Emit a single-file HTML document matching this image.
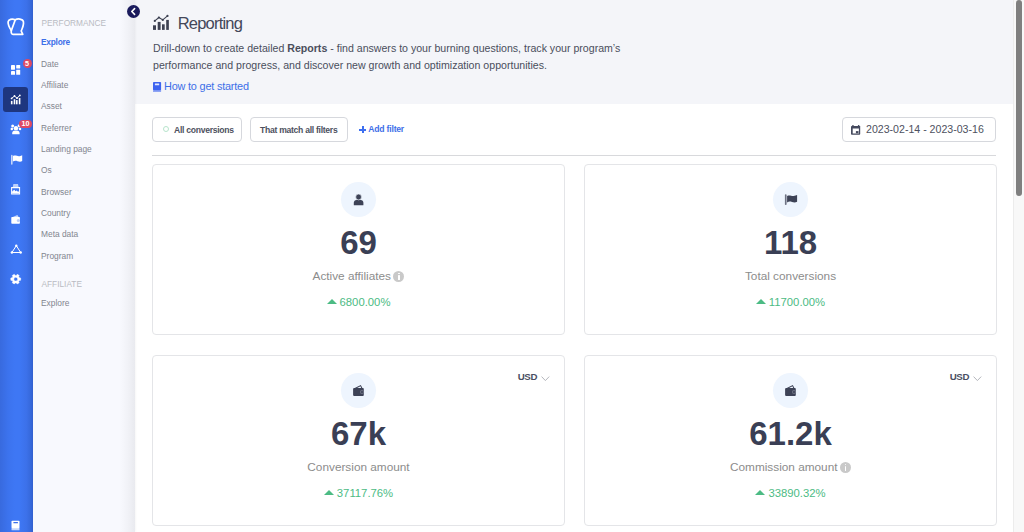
<!DOCTYPE html>
<html><head><meta charset="utf-8">
<style>
*{box-sizing:border-box;margin:0;padding:0}
html,body{width:1024px;height:532px;overflow:hidden;background:#fff;font-family:"Liberation Sans",sans-serif}
.abs{position:absolute}
svg{position:absolute;overflow:visible}
#rail{left:0;top:0;width:33px;height:532px;background:linear-gradient(90deg,#386ade 0%,#3c73ee 25%,#3e77f4 45%,#3e77f4 60%,#3c71ea 80%,#3668da 94%,#325fce 100%)}
#sub{left:33px;top:0;width:102px;height:532px;background:linear-gradient(90deg,#f8f9fe 0,#f8f9fe 85%,#f1f2f7 93%,#e9eaef 100%);box-shadow:1px 0 2px rgba(0,0,0,0.035);z-index:1}
#sub .h{position:absolute;left:8.5px;font-size:8.3px;letter-spacing:0px;color:#b9bbc2}
#sub .i{position:absolute;left:8px;font-size:8.4px;color:#82858f}
#sub .a{color:#3d6fe8;font-weight:bold;font-size:8.3px;letter-spacing:-0.2px}
#hdr{left:135px;top:0;width:878px;height:104px;background:#f4f5f9}
#scroll{left:1013px;top:0;width:11px;height:532px;background:#f8f8f8;border-left:1px solid #ececec}
#thumb{left:1016px;top:0;width:6px;height:196px;background:#7f7f7f;border-radius:3px}
.btn{position:absolute;top:117px;height:25px;border:1px solid #d6d8dd;border-radius:4px;background:#fff;font-size:8.6px;letter-spacing:-0.28px;font-weight:bold;color:#4d5160;line-height:24px}
.card{position:absolute;width:413px;height:171px;border:1px solid #e4e5e8;border-radius:4px;background:#fff}
.circ{position:absolute;left:188px;top:17px;width:35px;height:35px;border-radius:50%;background:#eef5fe}
.num{position:absolute;left:0;width:100%;text-align:center;font-weight:bold;font-size:33px;color:#3a3f55;top:59.6px;line-height:36px}
.lbl{position:absolute;left:0;width:100%;display:flex;justify-content:center;align-items:center;font-size:11.8px;color:#8c8c8c;top:104px;height:14px;line-height:14px}
.info{width:11px;height:11px;border-radius:50%;background:#c9c9c9;margin-left:2.5px;position:relative;top:0.5px}
.info:before{content:'';position:absolute;left:4.8px;top:2px;width:1.5px;height:1.4px;background:#fff;border-radius:1px}
.info:after{content:'';position:absolute;left:4.8px;top:4.3px;width:1.5px;height:4.6px;background:#fff;border-radius:0.5px}
.pct{position:absolute;left:0;width:100%;display:flex;justify-content:center;align-items:center;font-size:11.3px;color:#4cbb84;top:130px;height:14px;line-height:14px}
.tri{width:0;height:0;border-left:5.4px solid transparent;border-right:5.4px solid transparent;border-bottom:5.5px solid #4cbb84;margin-right:3px;position:relative;top:-0.3px}
.usd{position:absolute;right:27px;top:15px;font-size:9.7px;letter-spacing:-0.4px;font-weight:bold;color:#4a4f63}
.badge{position:absolute;background:#df4963;color:#fff;font-size:7.2px;font-weight:bold;text-align:center;line-height:8px;border-radius:5px}
</style></head><body>
<div id="rail" class="abs"></div>
<div class="abs" style="left:3px;top:87px;width:25px;height:25px;border-radius:3px;background:#1e367f"></div>
<svg width="33" height="532" style="left:0;top:0" viewBox="0 0 33 532">
  <!-- logo -->
  <g fill="none" stroke="#fff" stroke-width="1.7" stroke-linejoin="round" stroke-linecap="round">
    <path d="M11.3 30.6 C9.2 27.2 7.9 24 8.1 21.8 C8.4 19.3 12 18.6 15.3 19.8"/>
    <path d="M15.3 19.8 L11.3 30.6 C11 32.6 11.5 34.3 13 34.3 L22.8 34.3 L21.2 31 C22.4 28.4 24 24.6 23.4 21.7 C22.7 18.6 17.6 18.4 15.3 19.8 Z"/>
  </g>
  <!-- dashboard -->
  <g fill="#fff">
    <rect x="11" y="65" width="4" height="4.7" rx="0.4"/>
    <rect x="16.2" y="65" width="4" height="3.4" rx="0.4"/>
    <rect x="11" y="71" width="4" height="3.8" rx="0.4"/>
    <rect x="16.2" y="69.7" width="4" height="5.1" rx="0.4"/>
  </g>
  <!-- chart in active -->
  <g fill="#fff">
    <rect x="10.9" y="100.9" width="1.6" height="3.4"/>
    <rect x="13.7" y="99.2" width="1.6" height="5.1"/>
    <rect x="16" y="100.1" width="1.6" height="4.2"/>
    <rect x="18.8" y="98" width="1.6" height="6.3"/>
    <path d="M11.6 98.4 L14.5 96 L17 98.2 L19.8 95.4" fill="none" stroke="#fff" stroke-width="1"/>
    <circle cx="11.6" cy="98.4" r="0.9"/><circle cx="14.5" cy="96" r="0.9"/><circle cx="17" cy="98.2" r="0.9"/><circle cx="19.8" cy="95.4" r="0.9"/>
  </g>
  <!-- users -->
  <g fill="#fff">
    <circle cx="12.7" cy="126" r="1.5"/>
    <circle cx="11.8" cy="128.9" r="1.25"/>
    <circle cx="20" cy="128.9" r="1.25"/>
    <circle cx="19" cy="126" r="1.4"/>
    <path d="M12.2 134.2 V132.9 C12.2 131.3 13.4 130.4 14.8 130.4 H17 C18.4 130.4 19.6 131.3 19.6 132.9 V134.2 Z" stroke="#3e77f4" stroke-width="0.5" paint-order="stroke"/>
    <circle cx="15.95" cy="128.2" r="2.25" stroke="#3e77f4" stroke-width="0.7" paint-order="stroke"/>
  </g>
  <!-- flag -->
  <g fill="#fff">
    <rect x="11" y="154.8" width="1.6" height="9.9" rx="0.8" fill-opacity="0.7"/>
    <path d="M12.9 156 C15.5 154.8 17.5 156.6 19.5 156.2 C20.6 156 21.6 155.6 22.2 155.3 L22.2 161 C21 161.8 19.5 161.9 17.5 161.2 C15.6 160.6 14.2 160.8 12.9 161.6 Z"/>
  </g>
  <!-- image -->
  <g fill="#fff">
    <path d="M12.8 187 L13.4 184 L18 184 L18.6 187 Z" fill-opacity="0.65"/>
    <path d="M11.1 187.1 H20.1 V194.6 H11.1 Z M12.1 188.2 V193.6 H19.1 V188.2 Z" fill-rule="evenodd"/>
    <path d="M12.1 193.6 L12.1 191.5 L13.6 190.2 L14.4 189.8 L15.4 191.2 L16.6 190.6 L18 191.8 L19.1 191.2 L19.1 193.6 Z"/>
  </g>
  <!-- wallet -->
  <g fill="#fff">
    <path d="M12.2 217.3 L17.4 215 L18.8 217.3 Z" fill-opacity="0.7"/>
    <rect x="11.3" y="217.1" width="8.6" height="6.7" rx="0.7"/>
    <circle cx="18.3" cy="220.5" r="1.5" fill="#3b70ec" fill-opacity="0.35"/>
  </g>
  <!-- triangle -->
  <g fill="none" stroke="#fff" stroke-width="1">
    <path d="M16.3 245.7 L11.9 252.5 L20.7 252.5 Z"/>
  </g>
  <g fill="#fff"><circle cx="16.3" cy="245.7" r="1.2"/><circle cx="11.9" cy="252.5" r="1.2"/><circle cx="20.7" cy="252.5" r="1.2"/></g>
  <!-- gear -->
  <path fill="#fff" fill-rule="evenodd" stroke="#fff" stroke-width="0.5" stroke-linejoin="round" d="M19.30 277.79 L20.67 278.01 L20.67 280.29 L19.30 280.51 L18.70 281.54 L19.19 282.84 L17.23 283.98 L16.34 282.90 L15.16 282.90 L14.27 283.98 L12.31 282.84 L12.80 281.54 L12.20 280.51 L10.83 280.29 L10.83 278.01 L12.20 277.79 L12.80 276.76 L12.31 275.46 L14.27 274.32 L15.16 275.40 L16.34 275.40 L17.23 274.32 L19.19 275.46 L18.70 276.76 Z M17.70 279.15 A1.95 1.95 0 1 0 13.80 279.15 A1.95 1.95 0 1 0 17.70 279.15 Z"/>
  <!-- book bottom -->
  <g fill="#fff">
    <rect x="11.5" y="520.7" width="8" height="7.5" rx="0.8"/>
    <rect x="11.5" y="528" width="8" height="2.2" rx="0.5" fill-opacity="0.7"/>
    <rect x="13.3" y="522.1" width="4.7" height="1.2" rx="0.5" fill="#3b70ec"/>
  </g>
</svg>
<div class="badge" style="left:22.6px;top:59.4px;width:9px;height:9px;border-radius:50%;line-height:9px">5</div>
<div class="badge" style="left:18.8px;top:119.9px;width:13.2px;height:8.1px;border-radius:4px;line-height:8.1px">10</div>

<div id="sub" class="abs">
  <div class="h" style="top:17.5px">PERFORMANCE</div>
  <div class="i a" style="top:37px">Explore</div>
  <div class="i" style="top:58.5px">Date</div>
  <div class="i" style="top:79.8px">Affiliate</div>
  <div class="i" style="top:101px">Asset</div>
  <div class="i" style="top:122.5px">Referrer</div>
  <div class="i" style="top:144px">Landing page</div>
  <div class="i" style="top:165.4px">Os</div>
  <div class="i" style="top:186.7px">Browser</div>
  <div class="i" style="top:208px">Country</div>
  <div class="i" style="top:229.4px">Meta data</div>
  <div class="i" style="top:250.7px">Program</div>
  <div class="h" style="top:278.5px">AFFILIATE</div>
  <div class="i" style="top:297.5px">Explore</div>
</div>
<div id="hdr" class="abs"></div>
<div class="abs" style="left:127px;top:5px;width:13px;height:13px;border-radius:50%;background:#1a1a5c;z-index:2"></div>
<svg width="13" height="13" style="left:127px;top:5px;z-index:3" viewBox="0 0 13 13"><path d="M7.6 3.6 L4.8 6.5 L7.6 9.4" fill="none" stroke="#fff" stroke-width="1.6" stroke-linecap="round" stroke-linejoin="round"/></svg>

<!-- title chart icon -->
<svg width="16" height="15" style="left:152.9px;top:14.8px" viewBox="0 0 16 15">
  <g fill="#3d4152">
    <rect x="0" y="10.3" width="3" height="4.6"/>
    <rect x="4.7" y="6.9" width="2.9" height="8"/>
    <rect x="9" y="9.3" width="2.7" height="5.6"/>
    <rect x="13.2" y="4.9" width="2.65" height="10"/>
    <path d="M1.8 5.9 L5.9 2.5 L9.8 4.9 L14.5 0.9" fill="none" stroke="#3d4152" stroke-width="1.1"/>
    <circle cx="1.8" cy="5.9" r="1.1"/><circle cx="5.9" cy="2.5" r="1.1"/><circle cx="9.8" cy="4.9" r="1.1"/><circle cx="14.5" cy="0.9" r="1.1"/>
  </g>
</svg>
<div class="abs" style="left:177.7px;top:13.6px;font-size:16.5px;letter-spacing:-0.8px;color:#434759">Reporting</div>
<div class="abs" style="left:153px;top:40px;width:480px;font-size:10.6px;line-height:17px;color:#4a4e5c">Drill-down to create detailed <b>Reports</b> - find answers to your burning questions, track your program’s<br>performance and progress, and discover new growth and optimization opportunities.</div>
<svg width="9" height="10" style="left:153.1px;top:81.6px" viewBox="0 0 9 10">
  <rect x="0" y="0" width="8.1" height="8.3" rx="0.8" fill="#3d63f0"/>
  <rect x="0" y="8" width="8.1" height="2" rx="0.5" fill="#3d63f0" fill-opacity="0.55"/>
  <rect x="1.9" y="1.5" width="4.3" height="1.7" rx="0.3" fill="#fff" fill-opacity="0.85"/>
</svg>
<div class="abs" style="left:164px;top:80.3px;font-size:10.9px;letter-spacing:-0.2px;color:#3d6fe8">How to get started</div>

<div class="btn" style="left:152px;width:90px;padding-left:21px">All conversions</div>
<div class="abs" style="left:163.3px;top:126.3px;width:6px;height:6px;border-radius:50%;border:1px solid #b7e4cc"></div>
<div class="btn" style="left:250px;width:98px;padding-left:9px">That match all filters</div>
<div class="abs" style="left:359px;top:128.5px;width:7.2px;height:2px;background:#3d6ff0"></div>
<div class="abs" style="left:361.6px;top:126px;width:2px;height:7px;background:#3d6ff0"></div>
<div class="abs" style="left:368.3px;top:124.3px;font-size:8.6px;letter-spacing:-0.2px;font-weight:bold;color:#3d6fe8">Add filter</div>
<div class="btn" style="left:842px;width:154px;padding-left:23px;font-weight:normal;letter-spacing:0;font-size:10.6px;line-height:23.5px">2023-02-14 - 2023-03-16</div>
<svg width="10" height="10" style="left:851.3px;top:124.9px" viewBox="0 0 10 10">
  <g fill="#454a5e">
    <path fill-rule="evenodd" d="M0.8 1.1 H9.2 Q9.2 1.1 9.2 1.1 V9 Q9.2 9.8 8.4 9.8 H0.8 Q0 9.8 0 9 V1.9 Q0 1.1 0.8 1.1 Z M1.7 3.6 V8.4 H7.9 V3.6 Z"/>
    <rect x="1.2" y="0" width="1.5" height="1.6" rx="0.5"/>
    <rect x="6.9" y="0" width="1.5" height="1.6" rx="0.5"/>
    <rect x="4.9" y="6.1" width="2.6" height="2.2"/>
  </g>
</svg>
<div class="abs" style="left:152px;top:155px;width:844px;height:1px;background:#d8d9dc"></div>

<div class="card" style="left:152px;top:164px">
  <div class="circ"><svg width="35" height="35" style="left:0;top:0" viewBox="0 0 35 35"><path fill="#3d4256" d="M12.8 23.1 V20.8 C12.8 19.1 13.9 18 15.5 18 H19.7 C21.3 18 22.4 19.1 22.4 20.8 V23.1 Q22.4 23.3 22 23.3 H13.2 Q12.8 23.3 12.8 23.1 Z"/><circle cx="17.6" cy="15" r="2.9" fill="#3d4256" stroke="#eef5fe" stroke-width="0.6"/></svg></div>
  <div class="num">69</div>
  <div class="lbl">Active affiliates<span class="info"></span></div>
  <div class="pct"><span class="tri"></span>6800.00%</div>
</div>
<div class="card" style="left:584px;top:164px">
  <div class="circ"><svg width="35" height="35" style="left:0;top:0" viewBox="0 0 35 35"><rect x="11.9" y="12.3" width="1.7" height="10.8" rx="0.8" fill="#6e7283"/><path fill="#3d4256" d="M14.1 13.9 C16.6 12.6 18.6 14.4 20.6 14 C22 13.7 23.3 13.2 24.1 12.9 V19.7 C22.8 20.5 21 20.7 19 20 C17 19.3 15.6 19.5 14.1 20.4 Z"/></svg></div>
  <div class="num">118</div>
  <div class="lbl">Total conversions</div>
  <div class="pct"><span class="tri"></span>11700.00%</div>
</div>
<div class="card" style="left:152px;top:355px">
  <div class="circ"><svg width="35" height="35" style="left:0;top:0" viewBox="0 0 35 35"><path fill="#3d4256" d="M13.2 15.3 L19.8 11.9 L21.5 15.3 Z"/><path fill="#eef5fe" d="M15.6 15.3 L19.4 13.3 L20.3 15.3 Z"/><rect x="12.1" y="15" width="10.7" height="8.1" rx="1" fill="#3d4256"/><circle cx="21" cy="19" r="2.1" fill="#6e7283"/><circle cx="21" cy="19" r="1" fill="#3d4256"/></svg></div>
  <div class="usd">USD</div><svg width="9" height="6" style="right:14px;top:19.6px" viewBox="0 0 9 6"><path d="M0.6 0.6 L4.4 4.6 L8.2 0.6" fill="none" stroke="#b5b7bd" stroke-width="1"/></svg>
  <div class="num">67k</div>
  <div class="lbl">Conversion amount</div>
  <div class="pct"><span class="tri"></span>37117.76%</div>
</div>
<div class="card" style="left:584px;top:355px">
  <div class="circ"><svg width="35" height="35" style="left:0;top:0" viewBox="0 0 35 35"><path fill="#3d4256" d="M13.2 15.3 L19.8 11.9 L21.5 15.3 Z"/><path fill="#eef5fe" d="M15.6 15.3 L19.4 13.3 L20.3 15.3 Z"/><rect x="12.1" y="15" width="10.7" height="8.1" rx="1" fill="#3d4256"/><circle cx="21" cy="19" r="2.1" fill="#6e7283"/><circle cx="21" cy="19" r="1" fill="#3d4256"/></svg></div>
  <div class="usd">USD</div><svg width="9" height="6" style="right:14px;top:19.6px" viewBox="0 0 9 6"><path d="M0.6 0.6 L4.4 4.6 L8.2 0.6" fill="none" stroke="#b5b7bd" stroke-width="1"/></svg>
  <div class="num">61.2k</div>
  <div class="lbl">Commission amount<span class="info"></span></div>
  <div class="pct"><span class="tri"></span>33890.32%</div>
</div>

<div id="scroll" class="abs"></div>
<div id="thumb" class="abs"></div>
</body></html>
